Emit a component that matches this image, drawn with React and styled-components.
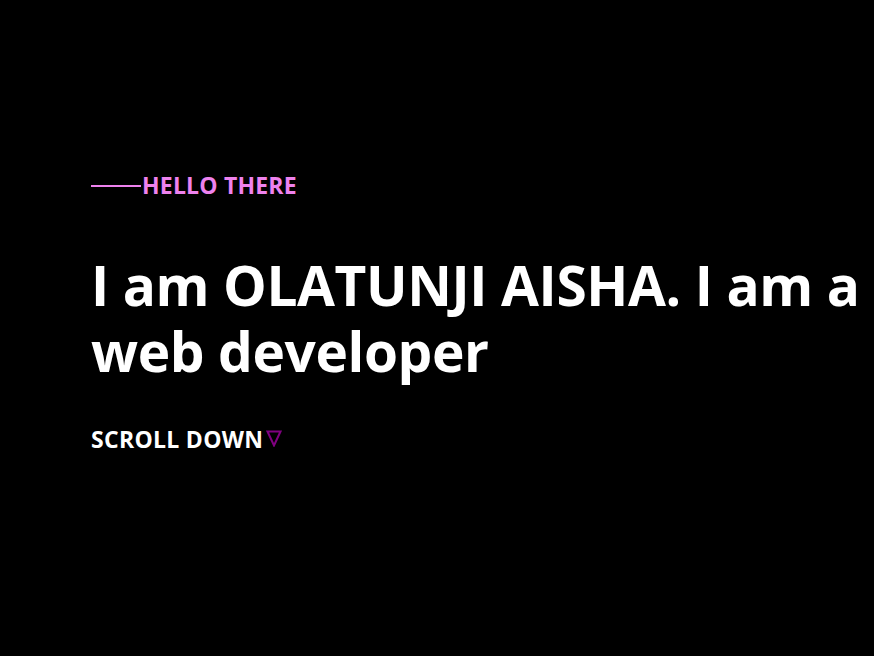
import { createGlobalStyle, styled } from 'styled-components';

const GlobalStyle = createGlobalStyle`
  body {
    margin: 0;
    background: #000;
    font-family: 'Open Sans', 'Noto Sans', sans-serif;
  }
`;

function DownArrow() {
  return (
    <Arrow viewBox="0 0 16 17" aria-hidden="true">
      <path d="M1.5 1.5 H14.5 L8 15.5 Z" fill="none" stroke="purple" strokeWidth="2" />
    </Arrow>
  );
}

function App() {
  return (
    <>
      <GlobalStyle />
      <Hero>
        <Greeting>
          <Rule />
          HELLO THERE
        </Greeting>
        <Title>I am OLATUNJI AISHA. I am a web developer</Title>
        <Scroll>
          SCROLL DOWN
          <DownArrow />
        </Scroll>
      </Hero>
    </>
  );
}

const Hero = styled.section`
  min-height: 656px;
  box-sizing: border-box;
  padding: 170px 0 0 91px;
  color: #fff;
`;

const Greeting = styled.h4`
  display: flex;
  align-items: center;
  margin: 0;
  font-size: 23px;
  line-height: 30px;
  font-weight: 700;
  letter-spacing: 0.2px;
  color: violet;
`;

const Rule = styled.span`
  display: inline-block;
  width: 50px;
  height: 2px;
  margin: 2px 1px 0 0;
  background: violet;
`;

const Title = styled.h1`
  margin: 52px 0 0;
  font-size: 55px;
  font-weight: 700;
  line-height: 66px;
  letter-spacing: -0.4px;
`;

const Scroll = styled.p`
  display: flex;
  align-items: center;
  margin: 40px 0 0;
  font-size: 23px;
  line-height: 30px;
  font-weight: 700;
  letter-spacing: 0.3px;
`;

const Arrow = styled.svg`
  width: 16px;
  height: 17px;
  margin: 0 0 2px 3px;
`;

export default App;
